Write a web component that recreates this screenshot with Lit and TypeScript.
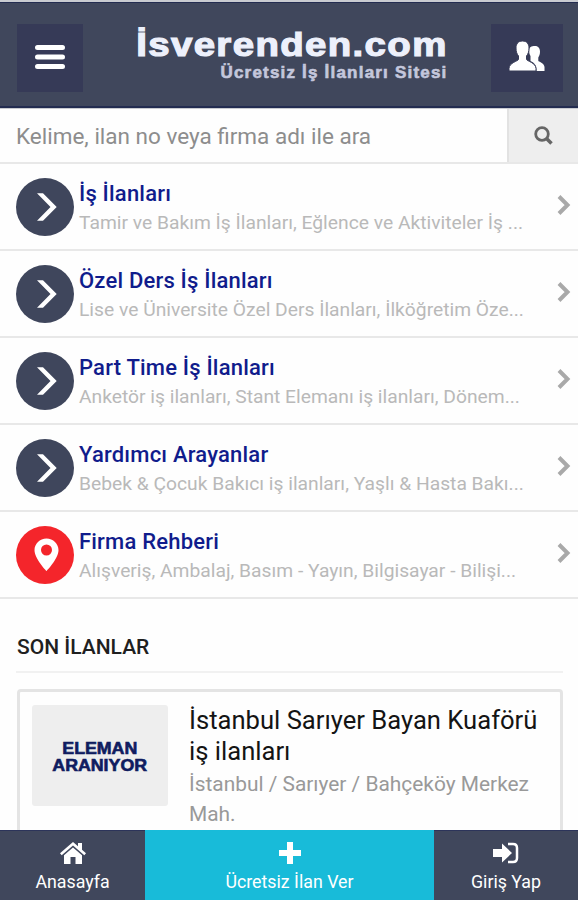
import { LitElement, html, css, svg } from "lit";
import { customElement, property } from "lit/decorators.js";

@customElement("category-row")
class CategoryRow extends LitElement {
  @property() heading = "";
  @property() summary = "";
  @property() kind = "arrow";
  static styles = css`
    :host { display: flex; box-sizing: border-box; height: 87px; border-bottom: 2px solid #e8e8e8; padding: 0 7px 0 16px; align-items: center; }
    .badge { width: 58px; height: 58px; flex: none; margin-top: 1px; }
    .text { flex: 1; min-width: 0; padding-left: 5px; padding-top: 3px; }
    .heading { color: #101c8c; font-size: 22px; letter-spacing: .2px; font-weight: 500; line-height: 30px; white-space: nowrap; }
    .summary { color: #b9b9b9; font-size: 19.25px; line-height: 29px; margin-top: -1px; white-space: nowrap; }
    .go { width: 14px; height: 22px; flex: none; margin-bottom: 3px; }
  `;
  render() {
    return html`
      <svg class="badge" viewBox="0 0 58 58">
        <circle cx="29" cy="29" r="29" fill=${this.kind === "pin" ? "#f4252b" : "#3f465c"}></circle>
        ${this.kind === "pin"
          ? svg`<path fill="#fff" fill-rule="evenodd" d="M30.500 12.500c-6.700 0-12 5.200-12 11.700C18.500 32.500 30.500 45 30.500 45s12-12.500 12-20.800c0-6.500-5.300-11.700-12-11.700zM30.500 18.500a5.500 5.500 0 1 1 0 11 5.500 5.500 0 0 1 0-11z"/>`
          : svg`<path fill="#fff" d="M21 15.300h6L40.700 29 27 42.700h-6L34.500 29z"/>`}
      </svg>
      <div class="text">
        <div class="heading">${this.heading}</div>
        <div class="summary">${this.summary}</div>
      </div>
      <svg class="go" viewBox="0 0 14 22"><path d="M2 2.500 10.500 11 2 19.500" fill="none" stroke="#a9a9a9" stroke-width="4"/></svg>`;
  }
}

@customElement("app-root")
class AppRoot extends LitElement {
  static styles = css`
    :host { display: flex; flex-direction: column; width: 578px; height: 900px; overflow: hidden; box-sizing: border-box; background: #fefefe; font-family: Roboto, "Liberation Sans", sans-serif; border-top: 2px solid #c9cbd0; }
    header { box-sizing: border-box; height: 106px; flex: none; background: #40475c; border-top: 1px solid #232c50; border-bottom: 2px solid #232c50; display: flex; justify-content: space-between; align-items: flex-start; padding: 21px 15px 0 17px; }
    .square { height: 68px; background: #363a57; display: flex; align-items: center; justify-content: center; }
    .menu { width: 66px; }
    .people { width: 72px; }
    .brand { width: 316px; margin-right: -10px; padding-right: 5px; font-family: "Liberation Sans", Arial, sans-serif; font-weight: 700; white-space: nowrap; display: flex; flex-direction: column; align-items: flex-end; padding-top: 1px; }
    .name { color: #edf0fb; font-size: 34px; line-height: 38px; letter-spacing: 1.2px; transform: scaleX(1.13); transform-origin: right; -webkit-text-stroke: 1.2px #edf0fb; }
    .tagline { color: #c4c7dc; font-size: 17px; line-height: 20px; letter-spacing: 1.2px; -webkit-text-stroke: .6px #c4c7dc; }
    .search { height: 56px; flex: none; box-sizing: border-box; display: flex; border-top: 1px solid #c9cbd0; border-bottom: 2px solid #e8e8e8; }
    .query { flex: 1; padding-left: 16px; color: #8d8d8d; font-size: 22.5px; line-height: 54px; white-space: nowrap; }
    .find { width: 71px; box-sizing: border-box; border-left: 2px solid #e2e2e2; background: #eee; display: flex; align-items: center; justify-content: center; }
    main { flex: 1; min-height: 0; overflow: hidden; }
    h2 { margin: 0 15px 16px 16px; padding-left: 1px; height: 72px; border-bottom: 2px solid #f1f1f1; font-size: 21px; line-height: 96px; font-weight: 500; color: #202020; }
    .card { margin: 0 15px 0 17px; height: 180px; border: 3px solid #e4e4e4; border-radius: 4px; display: flex; padding: 13px 12px; box-sizing: border-box; }
    .thumb { width: 136px; height: 101px; border-radius: 3px; background: #eee; color: #0f1c60; flex: none; display: flex; flex-direction: column; align-items: center; justify-content: center; font: 700 16px/17px "Liberation Sans", Arial, sans-serif; -webkit-text-stroke: .6px #0f1c60; box-sizing: border-box; padding-top: 2px; }
    .thumb span { transform: scaleX(1.11); }
    .info { padding-left: 21px; white-space: nowrap; }
    .title { font-size: 25.6px; line-height: 31px; color: #141414; }
    .place { font-size: 20.9px; line-height: 30px; color: #999; margin-top: 2px; }
    footer { height: 70px; flex: none; display: grid; grid-template-columns: 145px 289px 144px; }
    .tab { background: #40475c; color: #fff; display: flex; flex-direction: column; align-items: center; font-size: 17.8px; line-height: 26px; border-top: 1px solid #2c345a; box-sizing: border-box; padding-top: 9px; gap: 3px; }
    .primary { background: #18bbd9; border-color: #18bbd9; }
    .tab svg { height: 26px; }
  `;
  render() {
    return html`
      <header>
        <div class="square menu"><svg width="30" height="26" viewBox="0 0 30 26"><path d="M2.500 2.500h25M2.500 12h25M2.500 21.500h25" stroke="#fff" stroke-width="5" stroke-linecap="round"/></svg></div>
        <div class="brand"><div class="name">İsverenden.com</div><div class="tagline">Ücretsiz İş İlanları Sitesi</div></div>
        <div class="square people"><svg width="36" height="34" viewBox="0 0 36 34">
          <path fill="#fff" d="M26 5c3.500 0 5 2.500 5 5.500 0 3-.8 4.500-1.700 6v3.200c0 1 6.200 2.200 6.200 6.300v4h-8c0-6-2-8-6-10v-5c-1-1.500-1.300-3-1.300-5.500 0-3.500 2-4.500 5.800-4.500z"/>
          <path fill="#fff" stroke="#363a57" stroke-width="1" d="M13.500 0c4.500 0 6.500 3 6.500 7 0 4-1 6-2.500 8v3.300c0 1.700 9.500 3.400 9.500 9.200v2.500H0v-2.500c0-5.800 9.500-7.500 9.500-9.200V15C8 13 7 11 7 7c0-4 2-7 6.500-7z"/>
        </svg></div>
      </header>
      <div class="search">
        <div class="query">Kelime, ilan no veya firma adı ile ara</div>
        <div class="find"><svg width="19" height="19" viewBox="0 0 19 19"><circle cx="8" cy="8" r="6.300" fill="none" stroke="#666" stroke-width="2.800"/><path d="m12.500 12.500 5 5" stroke="#666" stroke-width="3.500"/></svg></div>
      </div>
      <main>
        <category-row heading="İş İlanları" summary="Tamir ve Bakım İş İlanları, Eğlence ve Aktiviteler İş ..."></category-row>
        <category-row heading="Özel Ders İş İlanları" summary="Lise ve Üniversite Özel Ders İlanları, İlköğretim Öze..."></category-row>
        <category-row heading="Part Time İş İlanları" summary="Anketör iş ilanları, Stant Elemanı iş ilanları, Dönem..."></category-row>
        <category-row heading="Yardımcı Arayanlar" summary="Bebek &amp; Çocuk Bakıcı iş ilanları, Yaşlı &amp; Hasta Bakı..."></category-row>
        <category-row kind="pin" heading="Firma Rehberi" summary="Alışveriş, Ambalaj, Basım - Yayın, Bilgisayar - Bilişi..."></category-row>
        <h2>SON İLANLAR</h2>
        <div class="card">
          <div class="thumb"><span>ELEMAN</span><span>ARANIYOR</span></div>
          <div class="info">
            <div class="title">İstanbul Sarıyer Bayan Kuaförü<br>iş ilanları</div>
            <div class="place">İstanbul / Sarıyer / Bahçeköy Merkez<br>Mah.</div>
          </div>
        </div>
      </main>
      <footer>
        <div class="tab"><svg width="26" height="26" viewBox="0 0 26 26"><path fill="#fff" d="M13 2 0 13.300l1.700 2L13 5.500l11.300 9.800 1.700-2-4-3.500V3h-4v3.300zM13 7.500 4 15.300V24h6.500v-7h5v7H22v-8.700z"/></svg><span>Anasayfa</span></div>
        <div class="tab primary"><svg width="24" height="26" viewBox="0 0 24 26"><path d="M12 2v22M1 13h22" stroke="#fff" stroke-width="6"/></svg><span>Ücretsiz İlan Ver</span></div>
        <div class="tab"><svg width="26" height="26" viewBox="0 0 26 26"><path fill="#fff" d="M0 9h9V3.500L19 13 9 22.500V17H0z"/><path d="M15 4h5q4 0 4 4v10q0 4-4 4h-5" fill="none" stroke="#fff" stroke-width="2.500"/></svg><span>Giriş Yap</span></div>
      </footer>`;
  }
}
